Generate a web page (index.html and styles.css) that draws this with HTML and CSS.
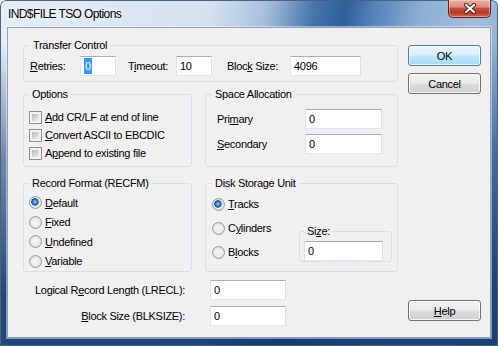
FILE: index.html
```html
<!DOCTYPE html>
<html>
<head>
<meta charset="utf-8">
<title>IND$FILE TSO Options</title>
<link rel="stylesheet" href="styles.css">
</head>
<body>
<div class="window">
  <div class="titlebar">
    <div class="title">IND$FILE TSO Options</div>
    <div class="close">
      <svg width="12" height="11" viewBox="0 0 12 11">
        <path d="M2 2 L10 9 M10 2 L2 9" stroke="#5a1f17" stroke-width="4.2" stroke-linecap="round"/>
        <path d="M2 2 L10 9 M10 2 L2 9" stroke="#ffffff" stroke-width="2.2" stroke-linecap="round"/>
      </svg>
    </div>
  </div>
  <div class="client">
    <div class="main">
      <fieldset class="group transfer">
        <legend>Transfer Control</legend>
        <div class="tc-row">
          <span class="lbl l-retries"><u>R</u>etries:</span>
          <div class="field w36"><span class="sel">0</span></div>
          <span class="lbl l-timeout">T<u>i</u>meout:</span>
          <div class="field w36">10</div>
          <span class="lbl l-block">Bloc<u>k</u> Size:</span>
          <div class="field w71">4096</div>
        </div>
      </fieldset>

      <div class="pair pair1">
        <fieldset class="group options">
          <legend>Options</legend>
          <div class="check-row"><span class="cb"></span><span><u>A</u>dd CR/LF at end of line</span></div>
          <div class="check-row"><span class="cb"></span><span><u>C</u>onvert ASCII to EBCDIC</span></div>
          <div class="check-row"><span class="cb"></span><span>A<u>p</u>pend to existing file</span></div>
        </fieldset>
        <fieldset class="group space">
          <legend>Space Allocation</legend>
          <div class="sa-row"><span class="lbl">Pri<u>m</u>ary</span><div class="field">0</div></div>
          <div class="sa-row"><span class="lbl"><u>S</u>econdary</span><div class="field">0</div></div>
        </fieldset>
      </div>

      <div class="pair pair2">
        <fieldset class="group record">
          <legend>Record Format (RECFM)</legend>
          <div class="radio-row"><span class="rb on"></span><span><u>D</u>efault</span></div>
          <div class="radio-row"><span class="rb"></span><span><u>F</u>ixed</span></div>
          <div class="radio-row"><span class="rb"></span><span><u>U</u>ndefined</span></div>
          <div class="radio-row"><span class="rb"></span><span><u>V</u>ariable</span></div>
        </fieldset>
        <fieldset class="group disk">
          <legend>Disk Storage Unit</legend>
          <div class="disk-inner">
            <div class="disk-radios">
              <div class="radio-row"><span class="rb on"></span><span><u>T</u>racks</span></div>
              <div class="radio-row"><span class="rb"></span><span>C<u>y</u>linders</span></div>
              <div class="radio-row"><span class="rb"></span><span>B<u>l</u>ocks</span></div>
            </div>
            <fieldset class="group size">
              <legend>Si<u>z</u>e:</legend>
              <div class="field">0</div>
            </fieldset>
          </div>
        </fieldset>
      </div>

      <div class="bottom">
        <span class="lbl">Logical R<u>e</u>cord Length (LRECL):</span>
        <div class="field">0</div>
        <span class="lbl"><u>B</u>lock Size (BLKSIZE):</span>
        <div class="field">0</div>
      </div>
    </div>

    <div class="buttons">
      <div class="btn default">OK</div>
      <div class="btn">Cancel</div>
      <div class="btn help"><span><u>H</u>elp</span></div>
    </div>
  </div>
</div>
</body>
</html>
```

FILE: styles.css
```css
* { box-sizing: border-box; }
html, body { margin: 0; padding: 0; }
body {
  width: 498px;
  height: 346px;
  overflow: hidden;
  font-family: "Liberation Sans", Arial, sans-serif;
  font-size: 11px;
  letter-spacing: -0.3px;
  color: #000;
  background: #ffffff;
}

.window {
  width: 498px;
  height: 346px;
  display: flex;
  flex-direction: column;
  border-radius: 6px 6px 0 0;
  overflow: hidden;
  background:
    linear-gradient(to bottom, rgba(18,58,112,0) 12%, rgba(18,58,112,.55) 45%, rgba(18,58,112,.92) 85%),
    linear-gradient(100deg, #e6eef7 0%, #d5e1ee 38%, #a6bfdc 48%, #4a78ad 56%, #2f609b 62%, #5b86ba 68%, #8eb0d5 76%, #a4bfdc 86%, #6f95c4 100%);
  box-shadow: inset 0 0 0 1px #4a6180;
}

.titlebar {
  height: 28px;
  flex: none;
  display: flex;
  align-items: flex-start;
  padding-left: 8px;
}
.title {
  font-size: 12px;
  letter-spacing: -0.6px;
  line-height: 28px;
  color: #000;
  text-shadow: 0 0 6px #fff, 0 0 10px rgba(255,255,255,.8);
}
.close {
  margin-left: auto;
  margin-right: 7px;
  width: 43px;
  height: 18px;
  border: 1px solid #5c2620;
  border-top: none;
  border-radius: 0 0 5px 5px;
  background: linear-gradient(#eab0a3 0%, #dc8d7d 40%, #c4513f 50%, #b83c28 75%, #d46a50 100%);
  box-shadow: inset 0 0 0 1px rgba(255,255,255,.35);
  display: flex;
  align-items: center;
  justify-content: center;
}

.client {
  margin: 0 8px;
  height: 309px;
  flex: none;
  background: #f0f0f0;
  display: flex;
  padding: 11px 0 0 15px;
  box-shadow: 0 0 0 1px #8da2ba, 0 0 0 2px rgba(255,255,255,.45);
}
.main {
  width: 375px;
  display: flex;
  flex-direction: column;
}
.buttons {
  margin-left: 10px;
  width: 73px;
  display: flex;
  flex-direction: column;
  gap: 7px;
  padding: 6px 0 16px;
}
.btn {
  height: 21px;
  border: 1px solid #707070;
  border-radius: 3px;
  background: linear-gradient(#f2f2f2 0%, #ebebeb 48%, #dddddd 52%, #cfcfcf 100%);
  box-shadow: inset 0 0 0 1px rgba(255,255,255,.8);
  display: flex;
  align-items: center;
  justify-content: center;
}
.btn.default {
  border-color: #3c7fb1;
  background: linear-gradient(#eaf6fd 0%, #d9f0fc 48%, #bee6fd 52%, #a7d9f5 100%);
}
.btn.help { margin-top: auto; }

.group {
  margin: 0;
  padding: 0;
  border: 1px solid #d5dfe5;
  border-radius: 3px;
  min-width: 0;
}
.group > legend {
  padding: 0 3px;
  line-height: 12px;
  height: 12px;
}

.field {
  height: 20px;
  background: #fff;
  border: 1px solid;
  border-color: #abadb3 #dbdfe6 #e3e9ef #e2e3ea;
  padding: 0 3px;
  display: flex;
  align-items: center;
  white-space: nowrap;
}
.w36 { width: 36px; }
.w71 { width: 71px; }
.sel {
  background: #3399ff;
  color: #fff;
  height: 16px;
  line-height: 16px;
  padding: 0 1px;
}

.group.transfer { padding: 5px 0 5px 6px; }
.tc-row { display: flex; align-items: center; }
.l-retries { width: 50px; }
.l-timeout { margin-left: 12px; width: 48px; }
.l-block { margin-left: 15px; width: 63px; }

.pair { display: flex; gap: 13px; }
.pair1 { margin-top: 6px; }
.pair2 { margin-top: 10px; }

.group.options { width: 169px; padding: 8px 0 4px 5px; }
.group.space { width: 193px; padding: 9px 0 0 11px; }
.group.space > legend { margin-left: -5px; }

.check-row { display: flex; align-items: center; height: 18px; gap: 3px; white-space: nowrap; }
.cb {
  flex: none;
  width: 13px;
  height: 13px;
  border: 1px solid #8e8f8f;
  padding: 2px;
  background: linear-gradient(135deg, #b4b8be, #f2f2f2) content-box, #f4f4f4;
}

.sa-row { display: flex; align-items: center; height: 20px; }
.sa-row + .sa-row { margin-top: 5px; }
.sa-row .lbl { width: 88px; }
.sa-row .field { width: 77px; }

.group.record { width: 169px; padding: 4px 0 0 5px; }
.radio-row { display: flex; align-items: center; height: 19.5px; gap: 3px; white-space: nowrap; }
.rb {
  flex: none;
  width: 13px;
  height: 13px;
  border-radius: 50%;
  border: 1px solid #9a9a9a;
  background: radial-gradient(circle at 50% 50%, #f8f8f8 0, #eeeeee 45%, #cfcfcf 100%);
}
.rb.on {
  background:
    radial-gradient(circle 4px at 45% 45%, #a3dcff 0, #2a86d0 2px, #0b4c8c 3.4px, rgba(11,76,140,0) 4px),
    radial-gradient(circle at 50% 50%, #f8f8f8 0, #eeeeee 45%, #cfcfcf 100%);
}

.group.disk { width: 193px; padding: 3px 0 0 6px; }
.disk-inner { display: flex; align-items: flex-start; }
.disk-radios { width: 87px; flex: none; }
.disk-radios .radio-row { height: 24px; }
.group.size { width: 93px; margin-top: 33px; padding: 4px 8px 0 4px; flex: none; }
.size .field { width: 79px; }

.bottom {
  display: grid;
  grid-template-columns: 162px 76px;
  column-gap: 25px;
  row-gap: 6px;
  margin-top: 8px;
  align-items: center;
}
.bottom .lbl { text-align: right; white-space: nowrap; }
```
